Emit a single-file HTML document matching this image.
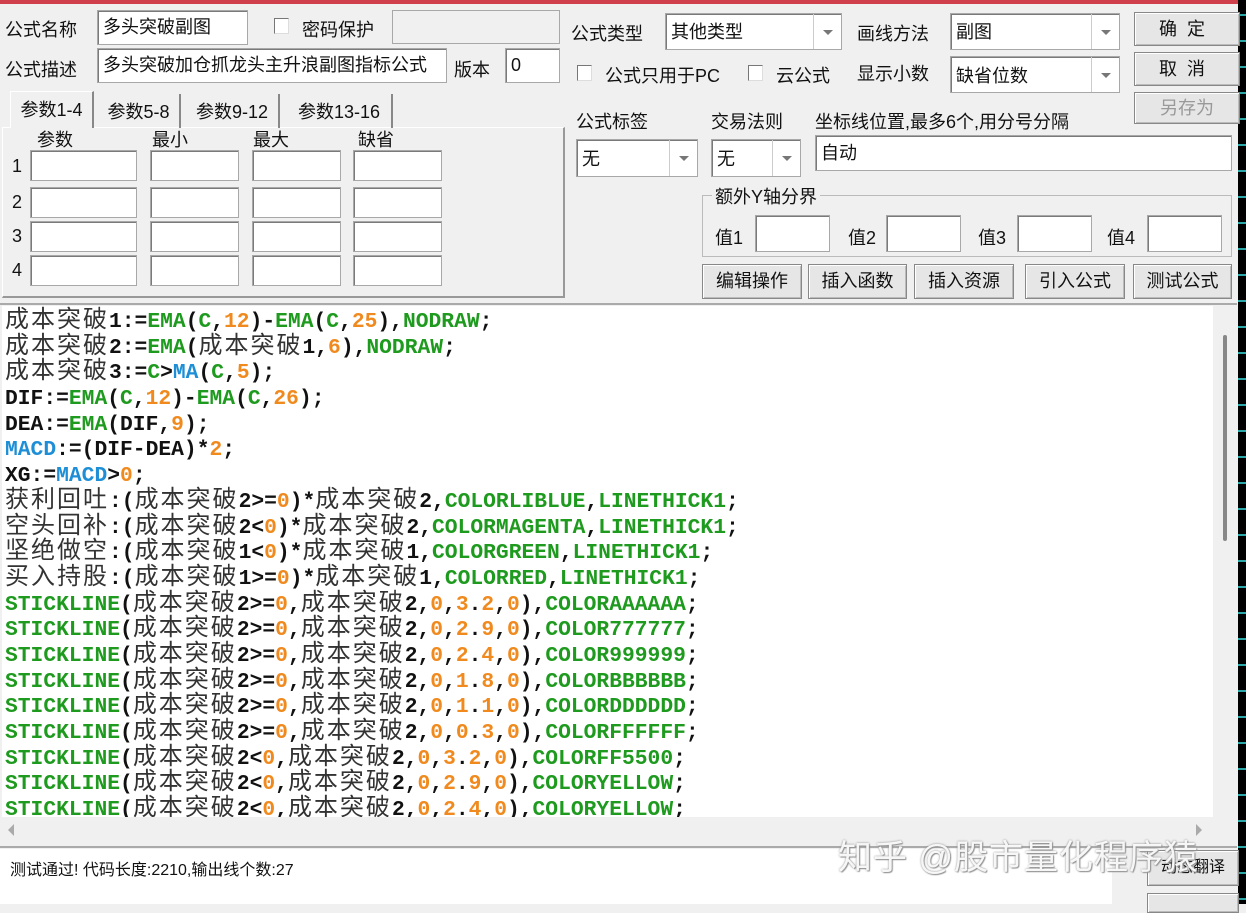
<!DOCTYPE html>
<html><head><meta charset="utf-8"><style>
*{margin:0;padding:0;box-sizing:border-box}
body{width:1246px;height:904px;overflow:hidden;background:#f0f0f0;position:relative;font-family:"Liberation Sans","Noto Sans CJK SC",sans-serif;font-size:18px;color:#111}
.a{position:absolute;white-space:nowrap}
.in{position:absolute;background:#fff;border:1px solid #a8a8a8;box-shadow:inset 1px 1px 0 #7a7a7a;padding:4px 5px;font-size:18px;line-height:24px;overflow:hidden;white-space:nowrap}
.cb{position:absolute;width:15px;height:16px;background:#fff;border:1px solid #777;border-right-color:#ddd;border-bottom-color:#ddd}
.combo .dd{position:absolute;right:0;top:0;bottom:0;width:28px;border-left:1px solid #ccc}
.combo .dd:after{content:"";position:absolute;left:9px;top:50%;margin-top:-2px;border:5px solid transparent;border-top:5px solid #777;border-bottom:0}
.btn{position:absolute;background:#e6e6e6;border:1px solid #888;box-shadow:inset 1px 1px 0 #fff,inset -1px -1px 0 #bbb;text-align:center;font-size:18px}
.tab{position:absolute;top:94px;height:34px;border-right:2px solid #888;padding-top:4px;text-align:center;font-size:18px}
#code{position:absolute;left:2px;top:306px;width:1211px;height:511px;background:#fff;overflow:hidden;padding-left:3px;padding-top:4px}
#code div{height:25.7px;line-height:25.7px;font-family:"Liberation Mono",monospace;font-weight:bold;font-size:21.3px;white-space:nowrap;color:#111;overflow:visible}
.z{font-family:"Noto Sans CJK SC",sans-serif;font-weight:normal;font-size:24px;letter-spacing:2px;color:#333;line-height:0}
.g{color:#1e9a1e}.o{color:#f08a1e}.b{color:#1e8fd6}
</style></head><body>
<div class="a" style="left:0;top:0;width:1246px;height:4px;background:#d0404c"></div>
<div class="a" style="left:1238px;top:0;width:8px;height:904px;background:repeating-linear-gradient(180deg,#000 0 14px,#2aa8a8 14px 16px,#000 16px 26px)"></div>

<div class="a" style="left:5px;top:16px">公式名称</div>
<div class="in" style="left:97px;top:10px;width:151px;height:35px">多头突破副图</div>
<div class="cb" style="left:274px;top:18px"></div>
<div class="a" style="left:302px;top:16px">密码保护</div>
<div class="in" style="left:392px;top:10px;width:168px;height:34px;background:#f0f0f0;box-shadow:none"></div>
<div class="a" style="left:5px;top:56px">公式描述</div>
<div class="in" style="left:97px;top:48px;width:350px;height:35px">多头突破加仓抓龙头主升浪副图指标公式</div>
<div class="a" style="left:454px;top:56px">版本</div>
<div class="in" style="left:505px;top:48px;width:55px;height:35px">0</div>

<div class="a" style="left:2px;top:127px;width:563px;height:171px;border:1px solid #fff;border-right:2px solid #999;border-bottom:2px solid #999"></div>
<div class="tab" style="left:10px;top:91px;width:84px;height:37px;background:#f0f0f0;border-left:1px solid #fff;border-top:1px solid #fff">参数1-4</div>
<div class="tab" style="left:98px;width:83px">参数5-8</div>
<div class="tab" style="left:186px;width:94px">参数9-12</div>
<div class="tab" style="left:287px;width:106px">参数13-16</div>
<div class="a" style="left:37px;top:126px">参数</div>
<div class="a" style="left:152px;top:126px">最小</div>
<div class="a" style="left:253px;top:126px">最大</div>
<div class="a" style="left:358px;top:126px">缺省</div>
<div class="a" style="left:12px;top:156px">1</div><div class="a" style="left:12px;top:192px">2</div><div class="a" style="left:12px;top:226px">3</div><div class="a" style="left:12px;top:260px">4</div>
<div class="in" style="left:30px;top:150px;width:107px;height:31px"></div><div class="in" style="left:150px;top:150px;width:89px;height:31px"></div><div class="in" style="left:252px;top:150px;width:89px;height:31px"></div><div class="in" style="left:353px;top:150px;width:89px;height:31px"></div>
<div class="in" style="left:30px;top:187px;width:107px;height:31px"></div><div class="in" style="left:150px;top:187px;width:89px;height:31px"></div><div class="in" style="left:252px;top:187px;width:89px;height:31px"></div><div class="in" style="left:353px;top:187px;width:89px;height:31px"></div>
<div class="in" style="left:30px;top:221px;width:107px;height:31px"></div><div class="in" style="left:150px;top:221px;width:89px;height:31px"></div><div class="in" style="left:252px;top:221px;width:89px;height:31px"></div><div class="in" style="left:353px;top:221px;width:89px;height:31px"></div>
<div class="in" style="left:30px;top:255px;width:107px;height:31px"></div><div class="in" style="left:150px;top:255px;width:89px;height:31px"></div><div class="in" style="left:252px;top:255px;width:89px;height:31px"></div><div class="in" style="left:353px;top:255px;width:89px;height:31px"></div>

<div class="a" style="left:571px;top:20px">公式类型</div>
<div class="in combo" style="left:665px;top:13px;width:177px;height:37px;padding-top:6px">其他类型<span class="dd"></span></div>
<div class="a" style="left:857px;top:20px">画线方法</div>
<div class="in combo" style="left:950px;top:13px;width:170px;height:37px;padding-top:6px">副图<span class="dd"></span></div>
<div class="cb" style="left:577px;top:65px"></div>
<div class="a" style="left:605px;top:62px">公式只用于PC</div>
<div class="cb" style="left:748px;top:65px"></div>
<div class="a" style="left:776px;top:62px">云公式</div>
<div class="a" style="left:857px;top:60px">显示小数</div>
<div class="in combo" style="left:950px;top:56px;width:170px;height:37px;padding-top:7px">缺省位数<span class="dd"></span></div>
<div class="btn" style="left:1134px;top:12px;width:106px;height:34px;line-height:32px;letter-spacing:10px">确定</div>
<div class="btn" style="left:1134px;top:52px;width:106px;height:34px;line-height:32px;letter-spacing:10px">取消</div>
<div class="btn" style="left:1134px;top:92px;width:106px;height:32px;line-height:30px;color:#999">另存为</div>

<div class="a" style="left:576px;top:108px">公式标签</div>
<div class="a" style="left:711px;top:108px">交易法则</div>
<div class="a" style="left:815px;top:108px">坐标线位置,最多6个,用分号分隔</div>
<div class="in combo" style="left:576px;top:139px;width:122px;height:38px;padding-top:7px">无<span class="dd"></span></div>
<div class="in combo" style="left:711px;top:139px;width:90px;height:38px;padding-top:7px">无<span class="dd"></span></div>
<div class="in" style="left:815px;top:135px;width:417px;height:36px;padding-top:5px">自动</div>
<div class="a" style="left:702px;top:195px;width:530px;height:62px;border:1px solid #bbb"></div>
<div class="a" style="left:712px;top:183px;background:#f0f0f0;padding:0 3px">额外Y轴分界</div>
<div class="a" style="left:715px;top:224px">值1</div><div class="in" style="left:755px;top:215px;width:75px;height:37px"></div>
<div class="a" style="left:848px;top:224px">值2</div><div class="in" style="left:886px;top:215px;width:75px;height:37px"></div>
<div class="a" style="left:978px;top:224px">值3</div><div class="in" style="left:1017px;top:215px;width:75px;height:37px"></div>
<div class="a" style="left:1107px;top:224px">值4</div><div class="in" style="left:1147px;top:215px;width:75px;height:37px"></div>
<div class="btn" style="left:702px;top:264px;width:100px;height:35px;line-height:33px">编辑操作</div>
<div class="btn" style="left:808px;top:264px;width:99px;height:35px;line-height:33px">插入函数</div>
<div class="btn" style="left:914px;top:264px;width:100px;height:35px;line-height:33px">插入资源</div>
<div class="btn" style="left:1025px;top:264px;width:100px;height:35px;line-height:33px">引入公式</div>
<div class="btn" style="left:1133px;top:264px;width:99px;height:35px;line-height:33px">测试公式</div>

<div class="a" style="left:0;top:303px;width:1237px;height:2px;background:#aaa"></div>
<div id="code">
<div><span class="z">成本突破</span>1:=<span class="g">EMA</span>(<span class="g">C</span>,<span class="o">12</span>)-<span class="g">EMA</span>(<span class="g">C</span>,<span class="o">25</span>),<span class="g">NODRAW</span>;</div>
<div><span class="z">成本突破</span>2:=<span class="g">EMA</span>(<span class="z">成本突破</span>1,<span class="o">6</span>),<span class="g">NODRAW</span>;</div>
<div><span class="z">成本突破</span>3:=<span class="g">C</span>&gt;<span class="b">MA</span>(<span class="g">C</span>,<span class="o">5</span>);</div>
<div>DIF:=<span class="g">EMA</span>(<span class="g">C</span>,<span class="o">12</span>)-<span class="g">EMA</span>(<span class="g">C</span>,<span class="o">26</span>);</div>
<div>DEA:=<span class="g">EMA</span>(DIF,<span class="o">9</span>);</div>
<div><span class="b">MACD</span>:=(DIF-DEA)*<span class="o">2</span>;</div>
<div>XG:=<span class="b">MACD</span>&gt;<span class="o">0</span>;</div>
<div><span class="z">获利回吐</span>:(<span class="z">成本突破</span>2&gt;=<span class="o">0</span>)*<span class="z">成本突破</span>2,<span class="g">COLORLIBLUE</span>,<span class="g">LINETHICK1</span>;</div>
<div><span class="z">空头回补</span>:(<span class="z">成本突破</span>2&lt;<span class="o">0</span>)*<span class="z">成本突破</span>2,<span class="g">COLORMAGENTA</span>,<span class="g">LINETHICK1</span>;</div>
<div><span class="z">坚绝做空</span>:(<span class="z">成本突破</span>1&lt;<span class="o">0</span>)*<span class="z">成本突破</span>1,<span class="g">COLORGREEN</span>,<span class="g">LINETHICK1</span>;</div>
<div><span class="z">买入持股</span>:(<span class="z">成本突破</span>1&gt;=<span class="o">0</span>)*<span class="z">成本突破</span>1,<span class="g">COLORRED</span>,<span class="g">LINETHICK1</span>;</div>
<div><span class="g">STICKLINE</span>(<span class="z">成本突破</span>2&gt;=<span class="o">0</span>,<span class="z">成本突破</span>2,<span class="o">0</span>,<span class="o">3</span>.<span class="o">2</span>,<span class="o">0</span>),<span class="g">COLORAAAAAA</span>;</div>
<div><span class="g">STICKLINE</span>(<span class="z">成本突破</span>2&gt;=<span class="o">0</span>,<span class="z">成本突破</span>2,<span class="o">0</span>,<span class="o">2</span>.<span class="o">9</span>,<span class="o">0</span>),<span class="g">COLOR777777</span>;</div>
<div><span class="g">STICKLINE</span>(<span class="z">成本突破</span>2&gt;=<span class="o">0</span>,<span class="z">成本突破</span>2,<span class="o">0</span>,<span class="o">2</span>.<span class="o">4</span>,<span class="o">0</span>),<span class="g">COLOR999999</span>;</div>
<div><span class="g">STICKLINE</span>(<span class="z">成本突破</span>2&gt;=<span class="o">0</span>,<span class="z">成本突破</span>2,<span class="o">0</span>,<span class="o">1</span>.<span class="o">8</span>,<span class="o">0</span>),<span class="g">COLORBBBBBB</span>;</div>
<div><span class="g">STICKLINE</span>(<span class="z">成本突破</span>2&gt;=<span class="o">0</span>,<span class="z">成本突破</span>2,<span class="o">0</span>,<span class="o">1</span>.<span class="o">1</span>,<span class="o">0</span>),<span class="g">COLORDDDDDD</span>;</div>
<div><span class="g">STICKLINE</span>(<span class="z">成本突破</span>2&gt;=<span class="o">0</span>,<span class="z">成本突破</span>2,<span class="o">0</span>,<span class="o">0</span>.<span class="o">3</span>,<span class="o">0</span>),<span class="g">COLORFFFFFF</span>;</div>
<div><span class="g">STICKLINE</span>(<span class="z">成本突破</span>2&lt;<span class="o">0</span>,<span class="z">成本突破</span>2,<span class="o">0</span>,<span class="o">3</span>.<span class="o">2</span>,<span class="o">0</span>),<span class="g">COLORFF5500</span>;</div>
<div><span class="g">STICKLINE</span>(<span class="z">成本突破</span>2&lt;<span class="o">0</span>,<span class="z">成本突破</span>2,<span class="o">0</span>,<span class="o">2</span>.<span class="o">9</span>,<span class="o">0</span>),<span class="g">COLORYELLOW</span>;</div>
<div><span class="g">STICKLINE</span>(<span class="z">成本突破</span>2&lt;<span class="o">0</span>,<span class="z">成本突破</span>2,<span class="o">0</span>,<span class="o">2</span>.<span class="o">4</span>,<span class="o">0</span>),<span class="g">COLORYELLOW</span>;</div>
</div>
<div class="a" style="left:1213px;top:306px;width:24px;height:512px;background:#f0f0f0"></div>
<div class="a" style="left:1223px;top:335px;width:4px;height:206px;background:#888;border-radius:2px"></div>
<div class="a" style="left:2px;top:817px;width:1211px;height:27px;background:#f0f0f0"></div>
<div class="a" style="left:8px;top:824px;border:6px solid transparent;border-right:6px solid #aaa;border-left:0"></div>
<div class="a" style="left:1196px;top:824px;border:6px solid transparent;border-left:6px solid #aaa;border-right:0"></div>
<div class="a" style="left:0;top:846px;width:1237px;height:2px;background:#aaa"></div>
<div class="a" style="left:0;top:849px;width:1112px;height:55px;background:#fff"></div>
<div class="a" style="left:10px;top:856px;font-size:16px">测试通过! 代码长度:2210,输出线个数:27</div>
<div class="btn" style="left:1147px;top:850px;width:92px;height:36px;line-height:34px;font-size:16px">动态翻译</div>
<div class="btn" style="left:1147px;top:893px;width:92px;height:20px"></div>
<div class="a" style="left:838px;top:830px;font-size:34px;color:rgba(255,255,255,.92);text-shadow:0 0 2px #888,1px 1px 1px #999;letter-spacing:1px">知乎 @股市量化程序猿</div>
</body></html>
